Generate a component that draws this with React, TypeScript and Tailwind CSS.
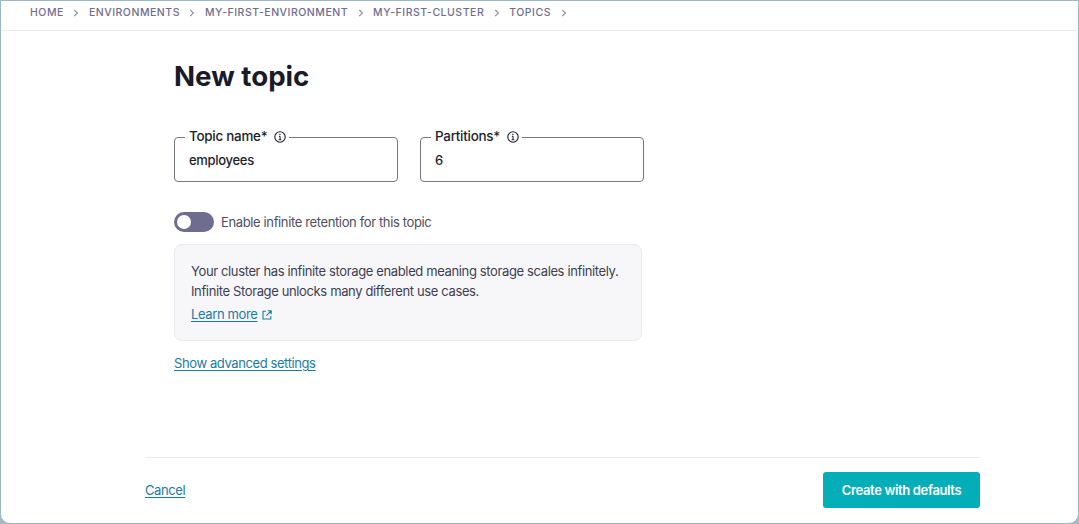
import React from 'react';

const crumbs = ['Home', 'Environments', 'my-first-environment', 'my-first-cluster', 'Topics'];

function Chevron() {
  return (
    <svg width="6" height="8" viewBox="0 0 6 8" fill="none" className="mx-[9.5px]">
      <path d="M1.2 0.8 L4.4 4 L1.2 7.2" stroke="#8c8aa6" strokeWidth="1.1" />
    </svg>
  );
}

function InfoIcon() {
  return (
    <svg width="12" height="12" viewBox="0 0 12 12" fill="none">
      <circle cx="6" cy="6" r="5.2" stroke="#1d1d2b" strokeWidth="1.1" />
      <path d="M4.9 5.4 H6.1 V8.6 M4.7 8.7 H7.3" stroke="#1d1d2b" strokeWidth="1" />
      <circle cx="5.9" cy="3.5" r="0.7" fill="#1d1d2b" />
    </svg>
  );
}

function ExternalIcon() {
  return (
    <svg width="10" height="10" viewBox="0 0 10 10" fill="none">
      <path d="M4 1.2 H1 V9 H8.8 V6" stroke="#1a7ca3" strokeWidth="1.1" />
      <path d="M5.8 0.8 H9.2 V4.2 M9 1 L4.4 5.6" stroke="#1a7ca3" strokeWidth="1.1" />
    </svg>
  );
}

function Field({ label, value }: { label: string; value: string }) {
  return (
    <fieldset className="w-[224px] h-[52px] border border-[#77757f] rounded-[4px] px-[10px]">
      <legend className="flex items-center h-[14px] pl-[4px] pr-[3px] text-[13.4px] leading-[14px] tracking-[-0.25px] font-medium text-[#1d1d2b]">
        <span className="-mt-[2px]">{label}</span>
        <span className="ml-[7px] -mt-[1px]">
          <InfoIcon />
        </span>
      </legend>
      <div className="pl-[4px] pt-[5.5px] text-[13px] leading-[20px] tracking-[-0.3px] font-medium text-[#1d1d2b]">{value}</div>
    </fieldset>
  );
}

export default function App() {
  return (
    <div className="h-[524px] w-[1079px] bg-[#a9b9c0] font-['Inter',sans-serif] overflow-hidden">
      <div className="h-[524px] bg-white border border-[#9ab9c8] rounded-b-[10px] flex flex-col">
        <header className="h-[30px] shrink-0 border-b border-[#e9e9ef] flex items-center pl-[29px] pb-[6px] text-[10.5px] leading-[16px] font-medium uppercase tracking-[0.52px] text-[#6f6d8f]">
          {crumbs.map((c) => (
            <React.Fragment key={c}>
              <span>{c}</span>
              <Chevron />
            </React.Fragment>
          ))}
        </header>

        <main className="flex-1 pl-[173px] pt-[27px]">
          <h1 className="text-[27.7px] leading-[36px] font-bold text-[#1a1a28]">New topic</h1>

          <div className="flex gap-[22px] mt-[36px]">
            <Field label="Topic name*" value="employees" />
            <Field label="Partitions*" value="6" />
          </div>

          <div className="flex items-center mt-[30px] h-[20px]">
            <div className="w-[40px] h-[20px] rounded-full bg-[#6f6d8f] flex items-center pl-[3px]">
              <div className="w-[14px] h-[14px] rounded-full bg-white" />
            </div>
            <span className="ml-[7px] pt-[1px] text-[13px] tracking-[-0.37px] text-[#4f4e62]">Enable infinite retention for this topic</span>
          </div>

          <div className="w-[468px] h-[97px] mt-[12px] bg-[#f7f7fa] border border-[#e9e9ef] rounded-[8px] pl-[16px] pt-[17px] text-[13px] tracking-[-0.37px] leading-[19.5px] text-[#3f3e52]">
            <p>Your cluster has infinite storage enabled meaning storage scales infinitely.</p>
            <p>Infinite Storage unlocks many different use cases.</p>
            <div className="flex items-center gap-[4px] mt-[4px]">
              <a className="underline underline-offset-2 text-[#1a7ca3]">Learn more</a>
              <ExternalIcon />
            </div>
          </div>

          <a className="block mt-[12px] text-[13px] tracking-[-0.4px] leading-[20px] underline underline-offset-2 text-[#1a7ca3]">Show advanced settings</a>
        </main>

        <footer className="h-[66px] shrink-0 ml-[144px] mr-[98px] border-t border-[#e9e9ef] flex items-center justify-between pb-[1px]">
          <a className="pt-[2px] text-[13px] tracking-[-0.4px] underline underline-offset-2 text-[#1a7ca3]">Cancel</a>
          <button className="w-[157px] h-[36px] pt-[1px] bg-[#03aeb9] rounded-[3px] text-white text-[13px] tracking-[-0.35px] font-semibold">Create with defaults</button>
        </footer>
      </div>
    </div>
  );
}
